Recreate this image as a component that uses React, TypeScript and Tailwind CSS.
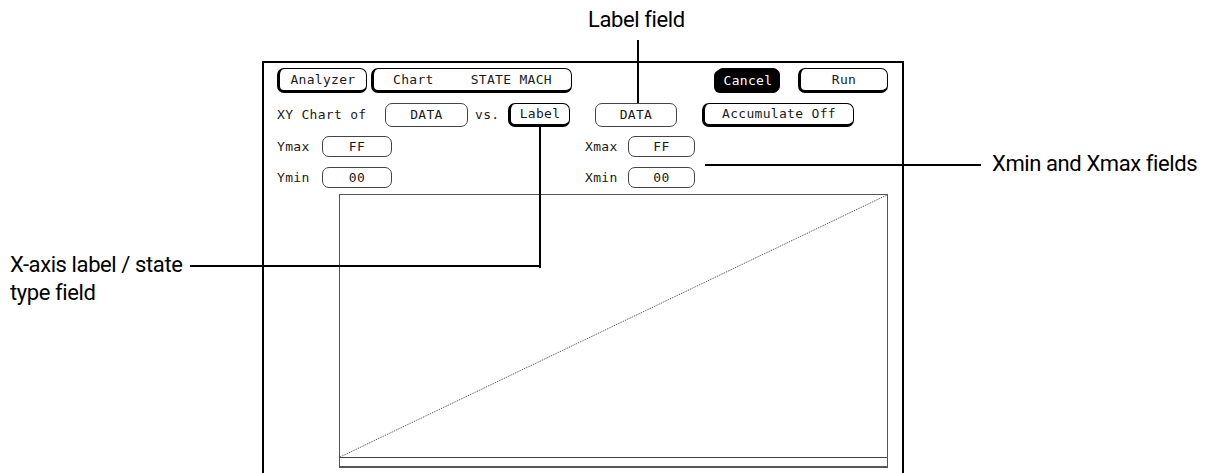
import React from 'react'

const MONO = { fontFamily: '"DejaVu Sans Mono", "Liberation Mono", monospace' }
const NOTE = { fontFamily: 'Roboto, "Liberation Sans", sans-serif' }

function Raised({ w, ml = 0, children, className = '' }: { w: number; ml?: number; children: React.ReactNode; className?: string }) {
  return (
    <div
      className={`h-full flex items-center justify-center rounded-[7px] border border-black border-l-[3px] border-b-[3px] ${className}`}
      style={{ width: w, marginLeft: ml }}
    >
      {children}
    </div>
  )
}

function Field({ w, ml = 0, children }: { w: number; ml?: number; children: React.ReactNode }) {
  return (
    <div
      className="h-full flex items-center justify-center rounded-[7px] border border-[#444]"
      style={{ width: w, marginLeft: ml }}
    >
      {children}
    </div>
  )
}

function Label({ w, ml = 0, children }: { w: number; ml?: number; children: React.ReactNode }) {
  return (
    <div className="h-full flex items-center" style={{ width: w, marginLeft: ml }}>
      {children}
    </div>
  )
}

export default function App() {
  return (
    <div className="relative w-[1208px] h-[473px] overflow-hidden bg-white text-black">
      {/* callout above */}
      <div className="h-[61px] pt-[6px] pl-[588px] text-[22px] tracking-[-0.4px] leading-[28px]" style={NOTE}>
        Label field
      </div>

      <div className="flex h-[412px]">
        <div className="w-[262px] pt-[190px] pl-[10px] text-[22px] tracking-[-0.4px] leading-[28px]" style={NOTE}>
          X-axis label / state
          <br />
          type field
        </div>

        {/* analyzer screen */}
        <div className="w-[642px] h-full border-2 border-b-0 border-black flex flex-col text-[13px] tracking-[0.3px] text-[#1a1a1a]" style={MONO}>
          <div className="flex h-[25px] mt-[5px] pl-[13px]">
            <Raised w={90}>Analyzer</Raised>
            <Raised w={201} ml={4} className="!justify-between px-[19px]">
              <span>Chart</span>
              <span>STATE MACH</span>
            </Raised>
            <div
              className="h-full flex items-center justify-center rounded-[7px] bg-black text-white border border-black shadow-[-3px_1px_0_-1px_#000]"
              style={{ width: 64, marginLeft: 144 }}
            >
              Cancel
            </div>
            <Raised w={90} ml={18}>Run</Raised>
          </div>

          <div className="flex h-[24px] mt-[10px] pl-[13px]">
            <Label w={108}>XY Chart of</Label>
            <Field w={83}>DATA</Field>
            <Label w={33} ml={7}>vs.</Label>
            <Raised w={62}>Label</Raised>
            <Field w={82} ml={25}>DATA</Field>
            <Raised w={152} ml={25}>Accumulate Off</Raised>
          </div>

          <div className="flex h-[21px] mt-[9px] pl-[13px]">
            <Label w={45}>Ymax</Label>
            <Field w={70}>FF</Field>
            <Label w={43} ml={193}>Xmax</Label>
            <Field w={67}>FF</Field>
          </div>

          <div className="flex h-[21px] mt-[10px] pl-[13px]">
            <Label w={45}>Ymin</Label>
            <Field w={70}>00</Field>
            <Label w={43} ml={193}>Xmin</Label>
            <Field w={67}>00</Field>
          </div>

          <div className="ml-[75px] mt-[6px] w-[549px] h-[274px] border border-[#555] border-b-2 flex flex-col">
            <div className="flex-1">
              <svg width="100%" height="100%" viewBox="0 0 547 262" preserveAspectRatio="none">
                <line x1="0" y1="262" x2="547" y2="0" stroke="#444" strokeWidth="1" strokeDasharray="1 1" />
              </svg>
            </div>
            <div className="h-[10px] border-t border-[#444]" />
          </div>
        </div>

        <div className="flex-1 pt-[89px] pl-[88px] text-[22px] tracking-[-0.4px] leading-[28px]" style={NOTE}>
          Xmin and Xmax fields
        </div>
      </div>

      {/* leader lines */}
      <div className="absolute left-[637px] top-[40px] w-[2px] h-[63px] bg-black" />
      <div className="absolute left-[539px] top-[127px] w-[2px] h-[141px] bg-black" />
      <div className="absolute left-[190px] top-[265px] w-[351px] h-[2px] bg-black" />
      <div className="absolute left-[705px] top-[164px] w-[276px] h-[2px] bg-black" />
    </div>
  )
}
